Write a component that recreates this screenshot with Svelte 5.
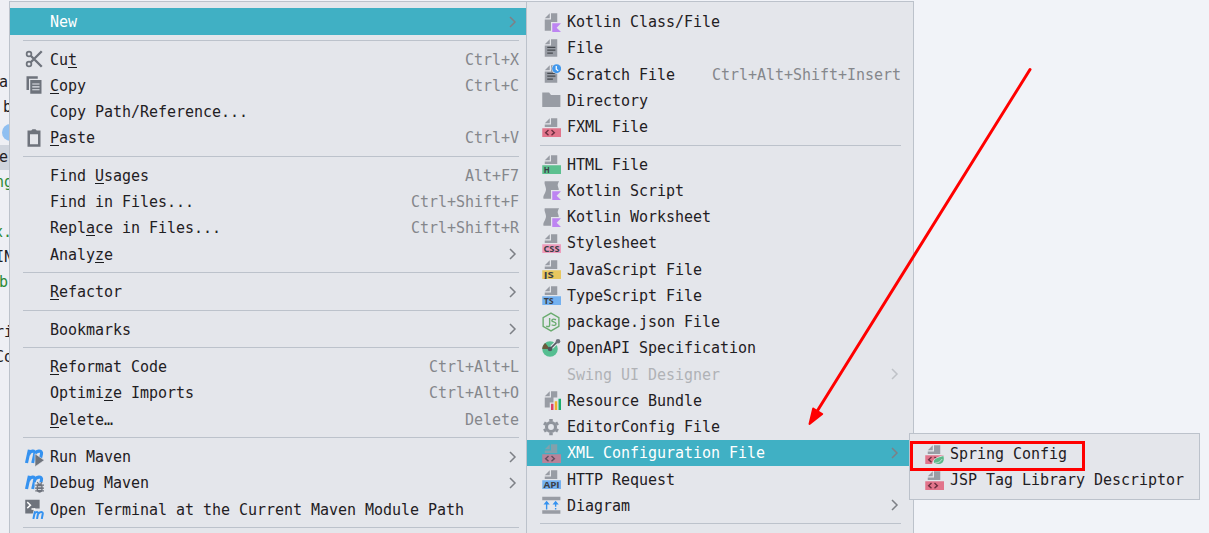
<script>
  // u: index of the mnemonic character
  const main = [
    { t: 'New', arrow: 1, on: 1 }, null,
    { t: 'Cut', u: 2, k: 'Ctrl+X', i: 'cut' },
    { t: 'Copy', u: 0, k: 'Ctrl+C', i: 'copy' },
    { t: 'Copy Path/Reference...' },
    { t: 'Paste', u: 0, k: 'Ctrl+V', i: 'paste' }, null,
    { t: 'Find Usages', u: 5, k: 'Alt+F7' },
    { t: 'Find in Files...', k: 'Ctrl+Shift+F' },
    { t: 'Replace in Files...', u: 4, k: 'Ctrl+Shift+R' },
    { t: 'Analyze', u: 5, arrow: 1 }, null,
    { t: 'Refactor', u: 0, arrow: 1 }, null,
    { t: 'Bookmarks', arrow: 1 }, null,
    { t: 'Reformat Code', u: 0, k: 'Ctrl+Alt+L' },
    { t: 'Optimize Imports', u: 6, k: 'Ctrl+Alt+O' },
    { t: 'Delete…', u: 0, k: 'Delete' }, null,
    { t: 'Run Maven', arrow: 1, i: 'run' },
    { t: 'Debug Maven', arrow: 1, i: 'debug' },
    { t: 'Open Terminal at the Current Maven Module Path', i: 'term' }, null
  ];
  const create = [
    { t: 'Kotlin Class/File', i: 'kclass' },
    { t: 'File', i: 'file' },
    { t: 'Scratch File', k: 'Ctrl+Alt+Shift+Insert', i: 'scratch' },
    { t: 'Directory', i: 'dir' },
    { t: 'FXML File', i: 'xml' }, null,
    { t: 'HTML File', i: 'tag', l: 'H', c: '#5cc08f' },
    { t: 'Kotlin Script', i: 'kscript' },
    { t: 'Kotlin Worksheet', i: 'kscript' },
    { t: 'Stylesheet', i: 'tag', l: 'CSS', c: '#ee9cbd' },
    { t: 'JavaScript File', i: 'tag', l: 'JS', c: '#e8c75e' },
    { t: 'TypeScript File', i: 'tag', l: 'TS', c: '#74b1f0' },
    { t: 'package.json File', i: 'node' },
    { t: 'OpenAPI Specification', i: 'openapi' },
    { t: 'Swing UI Designer', arrow: 1, off: 1 },
    { t: 'Resource Bundle', i: 'bundle' },
    { t: 'EditorConfig File', i: 'gear' },
    { t: 'XML Configuration File', arrow: 1, on: 1, i: 'xml' },
    { t: 'HTTP Request', i: 'tag', l: 'API', c: '#74b1f0' },
    { t: 'Diagram', arrow: 1, i: 'diagram' }, null
  ];
  const xml = [
    { t: 'Spring Config', i: 'spring' },
    { t: 'JSP Tag Library Descriptor', i: 'xml' }
  ];
  // visible tail of each editor line and its indent
  const code = [
    ['as', -1], ['b', 3], ['', 0], ['es', -1], ['ng', -5], ['', 0],
    ['x.', -6], ['IN', -5], ['b', -1], ['', 0], ['ri', -5], ['Co', -5]
  ];
  const green = [4, 6, 8];
</script>

{#snippet page()}
  <path fill="#989ca4" d="M7 1 3 5h4zM8 1v5H3v9h10V1z" />
{/snippet}

{#snippet halfPage()}
  <path fill="#989ca4" d="M7 1 3 5h4zM8 1v5H3v2h10V1z" />
{/snippet}

{#snippet kotlin()}
  <path fill="#bd84f2" d="M9 9h7l-3.5 3.5L16 16H9z" />
{/snippet}

{#snippet angles()}
  <path fill="#e2748b" d="M1 9h15v7H1z" />
  <path fill="none" stroke="#6c2f40" stroke-width="1.1" d="M6 10.4 3.7 12.5 6 14.6M8.4 10.4l2.3 2.1-2.3 2.1" />
{/snippet}

{#snippet maven()}
  <path fill="none" stroke="#3592f0" stroke-width="2.5" d="M2 12.800 4.300 2.200M3.600 6.400C4.800 2.600 9.400 2.200 8.600 5.600L7 12.800M8.200 6.400C9.400 2.600 14.800 2.200 14 5.600L13.200 9" />
{/snippet}

{#snippet icon(r)}
  <svg class="icon" viewBox="0 0 16 16">
    {#if r.i === 'cut'}
      <g fill="none" stroke="#6e737c">
        <circle cx="4" cy="4" r="1.9" stroke-width="1.4" /><circle cx="4" cy="12" r="1.9" stroke-width="1.4" />
        <path stroke-width="1.9" d="M5.4 5.4 14.2 14.2M5.4 10.6 14.2 1.8" />
      </g>
    {:else if r.i === 'copy'}
      <path fill="#6e737c" d="M2 1h9v2H4v9H2z" />
      <path fill="#6e737c" d="M5 4h9v11H5z" />
      <path stroke="#e4e6eb" stroke-width=".9" d="M6.6 7.200h5.800M6.600 9.500h5.800M6.600 11.800h5.800" />
    {:else if r.i === 'paste'}
      <path fill="#6e737c" fill-rule="evenodd" d="M2.8 2h3l1-1h2.400l1 1h3v13H2.800zM4.800 5v8h6.400V5z" />
    {:else if r.i === 'run'}
      {@render maven()}
      <path fill="#6e737c" stroke="#e4e6eb" stroke-width=".5" d="M8.800 5.400 16.200 10.600 8.800 15.800z" />
    {:else if r.i === 'debug'}
      {@render maven()}
      <path fill="#e4e6eb" d="M8.500 7.500h8V16h-8z" />
      <ellipse cx="12.500" cy="12" rx="2.500" ry="3.700" fill="#6e737c" />
      <path stroke="#6e737c" d="M9 9.700h7M8.800 12h7.400M9 14.300h7M10.600 7.200l1 1.600M14.400 7.200l-1 1.600" />
      <path stroke="#e4e6eb" stroke-width=".7" d="M11.200 11h2.600M11.200 13.200h2.600" />
    {:else if r.i === 'term'}
      <path fill="#6e737c" d="M1 .5h11.500v7H8l-1 4H1z" />
      <path fill="none" stroke="#fff" stroke-width="1.1" d="m2.600 2.500 2.600 2.400-2.600 2.400M6 8h3" />
      <path fill="none" stroke="#3592f0" stroke-width="1.600" d="m7.500 16 1.300-6.200M8.300 12c1.200-2 3.200-2 2.900-.2L10.400 16M11.300 12c1.200-2 4-2 3.700-.2L14.200 16" />
    {:else if r.i === 'file' || r.i === 'scratch'}
      {@render page()}
      <path stroke="#45494f" d="M5 7.500h6.500M5 9.700h6.500M5 12h4.500" />
      {#if r.i === 'scratch'}
        <circle cx="12.5" cy="3.700" r="4" fill="#e4e6eb" /><circle cx="12.500" cy="3.700" r="3.600" fill="#4298ec" />
        <path fill="none" stroke="#fff" d="M12.200 1.500v2.600l1.600 1.200" />
      {/if}
    {:else if r.i === 'kclass'}
      <path fill="#989ca4" d="M7 1 3 5h4zM8 1v5H3v9h5V8h5V1z" />
      {@render kotlin()}
    {:else if r.i === 'kscript'}
      <path fill="#989ca4" d="M3 1h11.500c-1 1.500-1.600 3-.7 5 .3.700.4 1.300.4 2H8v7H2C1.300 12 3.800 10.500 4 7.500 4 5 2.300 3.500 3 1z" />
      {@render kotlin()}
    {:else if r.i === 'dir'}
      <path fill="#989ca4" d="M1 2h5.500l1.500 2h7.500v9.500H1z" />
    {:else if r.i === 'xml'}
      {@render halfPage()}{@render angles()}
    {:else if r.i === 'spring'}
      {@render halfPage()}{@render angles()}
      <path fill="#e4e6eb" d="M6.500 16c.2-4 4-6 9.500-7v7z" />
      <path fill="#5cb98a" d="M8 15c-1-4 4-4 7.500-5.500 1.200 4-.8 6.500-4 6.500-1.500 0-2.300-.4-3.500-1z" />
      <path fill="none" stroke="#e4e6eb" stroke-width=".6" d="M8.500 15.300c3 0 4.800-1.300 6-3.300" />
    {:else if r.i === 'tag'}
      {@render halfPage()}
      <path fill={r.c} d="M1 9h15v7H1z" />
      <text x={r.l.length > 2 ? 1.9 : 2.2} y="14.9" textLength={r.l.length > 2 ? 13 : r.l.length > 1 ? 8 : 4.8} lengthAdjust="spacingAndGlyphs">{r.l}</text>
    {:else if r.i === 'node'}
      <g fill="none" stroke="#69ab6e" stroke-width="1.1">
        <path d="m8 .9 6.300 3.600v7L8 15.100l-6.300-3.600v-7z" />
        <path d="M6.900 4.800v5.600c0 1.300-1 1.600-2.700 1M12 6.200C9.800 5.200 8.300 5.900 8.700 7.100c.5 1 3.200.6 3.300 2.200.1 1.700-2.200 1.700-3.500.9" />
      </g>
    {:else if r.i === 'openapi'}
      <circle cx="7.200" cy="8.800" r="6.200" fill="#55be91" />
      <path fill="#6b5a3c" d="M7.200 8.800H1C1 7 2 5.200 3.400 4z" />
      <path stroke="#e4e6eb" stroke-width="3" d="M8.500 7.500 13 3" />
      <path stroke="#51565e" stroke-width="1.300" d="M7.200 8.800 13.500 2.500" />
      <circle cx="7.200" cy="8.800" r="1.800" fill="#51565e" /><circle cx="13.600" cy="2.500" r="1.800" fill="#6e737c" />
    {:else if r.i === 'bundle'}
      <path fill="#989ca4" d="M7 1 3 5h4zM8 1v5H3v8h4v-4h3V6h3V1z" />
      <path fill="#dc4068" d="M8 11h2v5H8z" /><path fill="#eeb02e" d="M11 9h2v7h-2z" /><path fill="#1cae6c" d="M14 7h2v9h-2z" />
    {:else if r.i === 'gear'}
      <circle cx="8" cy="8" r="3.600" fill="none" stroke="#8f949c" stroke-width="2.500" />
      <path stroke="#8f949c" stroke-width="2.800" d="M8 1.500v2M8 12.500v2M2.400 4.800l1.700 1M11.900 10.200l1.700 1M2.400 11.200l1.700-1M11.900 5.800l1.700-1" />
    {:else if r.i === 'diagram'}
      <path fill="#989ca4" d="M1 1.300h14.500v2.800H1zM1 12.200h14.500V15H1z" />
      <path fill="none" stroke="#3592f0" stroke-width="1.100" d="M4.500 11.600V6M11.700 11.600V10.400M11.700 9.400V6" />
      <path fill="#3592f0" d="M4.500 4.600 7 7.500H2zM11.700 4.600l2.500 2.900h-5z" />
    {/if}
  </svg>
{/snippet}

{#snippet menu(rows)}
  {#each rows as r}
    {#if r}
      <div class="row" class:on={r.on} class:off={r.off}>
        {@render icon(r)}
        <span class="label">{#if r.u !== undefined}{r.t.slice(0, r.u)}<span class="key">{r.t[r.u]}</span>{r.t.slice(r.u + 1)}{:else}{r.t}{/if}</span>
        {#if r.k}<span class="shortcut">{r.k}</span>{/if}
        {#if r.arrow}<svg class="chev" viewBox="0 0 8 12"><path d="m1 1 5 5-5 5" /></svg>{/if}
      </div>
    {:else}
      <div class="sep"></div>
    {/if}
  {/each}
{/snippet}

<div class="screen">
  <div class="code">
    {#each code as [text, indent], n}
      <div class="line" class:green={green.includes(n)} class:current={n === 3} style:text-indent="{indent}px">{#if n === 2}<span class="badge"></span>{:else}{text}{/if}</div>
    {/each}
  </div>
  <div class="menu first">{@render menu(main)}</div>
  <div class="menu second">{@render menu(create)}</div>
  <div class="menu third">{@render menu(xml)}</div>
  <div class="frame"></div>
  <svg class="pointer" viewBox="0 0 1209 533">
    <path d="M1030 69.500 816 413" stroke="#f00" stroke-width="3" stroke-linecap="round" />
    <path d="m809.500 424 3.700-15.500 9 5.500z" fill="#f00" stroke="#f00" stroke-width="2" stroke-linejoin="round" />
  </svg>
</div>

<style>
  :global(body) { margin: 0; overflow: hidden; }
  .screen {
    position: relative; width: 1209px; height: 533px; overflow: hidden;
    background: #f1f3f8; color: #1f2023;
    font: 15px "DejaVu Sans Mono", monospace; letter-spacing: -0.03px; white-space: pre;
  }
  .code { width: 12px; height: 463px; padding-top: 70px; background: #eeeff4; }
  .line { display: flow-root; height: 25px; line-height: 25px; }
  .line.green { color: #2c8a37; }
  .line.current { background: #d0d5de; }
  .badge { display: block; width: 17px; height: 17px; margin: 4px 0 0 2px; border-radius: 50%; background: #8fbff1; }
  .menu { position: absolute; box-sizing: border-box; padding-top: 6.45px; background: #e4e6eb; border: 1px solid #bcc2cb; }
  .first { left: 9px; top: 1px; width: 518px; height: 560px; }
  .second { left: 526px; top: 1px; width: 388px; height: 560px; }
  .third { left: 909px; top: 433px; width: 291px; height: 67px; }
  .row { display: flex; align-items: center; height: 26.25px; padding: 0 7px 0 14px; }
  .second .row { padding-right: 12px; }
  .row.on { background: #40b0c4; color: #fff; }
  .row.on .icon { opacity: .75; }
  .row.off { color: #b0b2b6; }
  .icon { width: 20px; height: 20px; flex: none; margin-right: 6px; }
  .icon text { font: bold 6.5px "Open Sans", sans-serif; letter-spacing: 0; fill: #3b4047; }
  .label { flex: 1; line-height: 20px; padding-top: 1px; }
  .key { box-shadow: 0 -1px 0 #1b1c1f inset; display: inline-block; height: 18px; line-height: 20px; vertical-align: top; }
  .shortcut { padding-top: 1px; line-height: 20px; color: #85878b; }
  .chev { width: 8px; height: 12px; margin-right: 2px; fill: none; stroke: #7d8086; stroke-width: 1.5; }
  .off .chev { stroke: #bfc2c7; }
  .sep { height: 1px; margin: 5px 7px 5.25px 13px; background: #bcc2cb; }
  .second .sep { margin-right: 12px; }
  .frame { position: absolute; box-sizing: border-box; left: 910px; top: 441px; width: 175px; height: 30px; border: 3px solid #f00; }
  .pointer { position: absolute; left: 0; top: 0; width: 1209px; height: 533px; }
</style>
